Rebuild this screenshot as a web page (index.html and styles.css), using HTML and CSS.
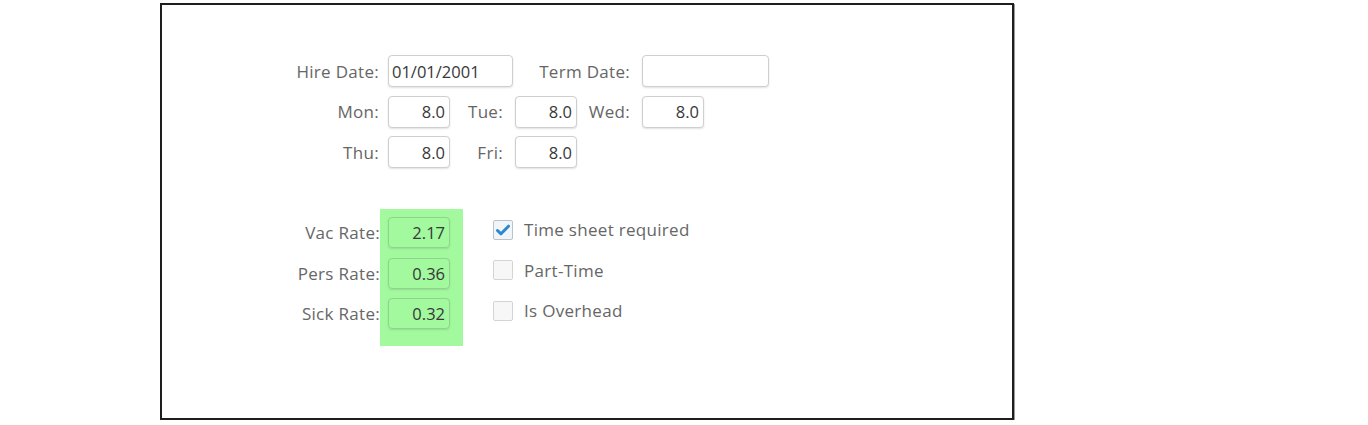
FILE: index.html
```html
<!DOCTYPE html>
<html>
<head>
<meta charset="utf-8">
<link rel="stylesheet" href="styles.css">
</head>
<body>
<div class="frame">
  <div class="top">
    <div class="row">
      <span class="lbl lbl1">Hire Date:</span>
      <input class="field wide" type="text" value="01/01/2001">
      <span class="lbl lbl-term">Term Date:</span>
      <input class="field wide2" type="text" value="">
    </div>
    <div class="row">
      <span class="lbl lbl1">Mon:</span>
      <input class="field num" type="text" value="8.0">
      <span class="lbl lbl2">Tue:</span>
      <input class="field num" type="text" value="8.0">
      <span class="lbl lbl3">Wed:</span>
      <input class="field num" type="text" value="8.0">
    </div>
    <div class="row">
      <span class="lbl lbl1">Thu:</span>
      <input class="field num" type="text" value="8.0">
      <span class="lbl lbl2">Fri:</span>
      <input class="field num" type="text" value="8.0">
    </div>
  </div>
  <div class="bottom">
    <div class="rate-labels">
      <span class="lbl rl">Vac Rate:</span>
      <span class="lbl rl">Pers Rate:</span>
      <span class="lbl rl">Sick Rate:</span>
    </div>
    <div class="green">
      <input class="field num rate" type="text" value="2.17">
      <input class="field num rate" type="text" value="0.36">
      <input class="field num rate" type="text" value="0.32">
    </div>
    <div class="checks">
      <div class="check-row">
        <span class="box checked"><svg width="14" height="12" viewBox="0 0 14 12"><path d="M1.5 6.5 L5 9.8 L12.5 2.2" fill="none" stroke="#2a87d0" stroke-width="3" stroke-linecap="round" stroke-linejoin="round"/></svg></span>
        <span class="check-lbl">Time sheet required</span>
      </div>
      <div class="check-row">
        <span class="box"></span>
        <span class="check-lbl">Part-Time</span>
      </div>
      <div class="check-row">
        <span class="box"></span>
        <span class="check-lbl">Is Overhead</span>
      </div>
    </div>
  </div>
</div>
</body>
</html>
```
FILE: styles.css
```css
* { box-sizing: border-box; }
html, body { margin: 0; padding: 0; background: #fff; }
body {
  font-family: "Open Sans", "DejaVu Sans", sans-serif;
  font-size: 17px;
}
.frame {
  margin: 3px 0 0 160px;
  width: 854px;
  height: 417px;
  border: 2px solid #1e1e1e;
  box-shadow: 1px 1px 0 #9a9a9a;
  padding-top: 50px;
}
.row {
  display: flex;
  align-items: center;
  height: 32px;
  margin-bottom: 8.5px;
}
.lbl {
  color: #666;
  text-align: right;
  white-space: nowrap;
  display: block;
  letter-spacing: 0.3px;
}
.lbl1 { width: 217px; margin-right: 9px; }
.lbl-term { width: 117px; margin-right: 12px; }
.lbl2 { width: 53px; margin-right: 12px; }
.lbl3 { width: 53px; margin-right: 12px; }
.field {
  font-family: "Open Sans", "DejaVu Sans", sans-serif;
  font-size: 16.5px;
  color: #383838;
  height: 32px;
  border: 1px solid #cfcfcf;
  border-radius: 4px;
  background: #fff;
  box-shadow: 0 1px 2px rgba(0,0,0,0.12);
  padding: 0 4px 0 3px;
  margin: 0;
  outline: none;
}
.wide { width: 125px; }
.wide2 { width: 127px; }
.num { width: 62px; text-align: right; }
.bottom {
  display: flex;
  align-items: flex-start;
  margin-top: 41px;
}
.rate-labels {
  width: 218px;
  padding-top: 8px;
  display: flex;
  flex-direction: column;
  gap: 9.5px;
}
.rl { height: 31px; line-height: 31px; }
.green {
  width: 83px;
  background: #a2f99e;
  padding: 8px 13px 17px 8px;
  display: flex;
  flex-direction: column;
  gap: 9.5px;
}
.rate {
  height: 31px;
  background: transparent;
  border-color: #8fd48b;
  box-shadow: 0 1px 2px rgba(0,0,0,0.10);
}
.checks {
  margin-left: 30px;
  padding-top: 5px;
  display: flex;
  flex-direction: column;
  gap: 9.5px;
}
.check-row {
  display: flex;
  align-items: center;
  height: 31px;
}
.box {
  width: 20px;
  height: 20px;
  border: 1px solid #d4d4d4;
  background: #f7f7f7;
  border-radius: 2px;
  display: flex;
  align-items: center;
  justify-content: center;
  margin-right: 11px;
}
.box.checked { border-color: #b9c3cc; background: #f2f5f8; }
.check-lbl { color: #666; letter-spacing: 0.3px; }
```
